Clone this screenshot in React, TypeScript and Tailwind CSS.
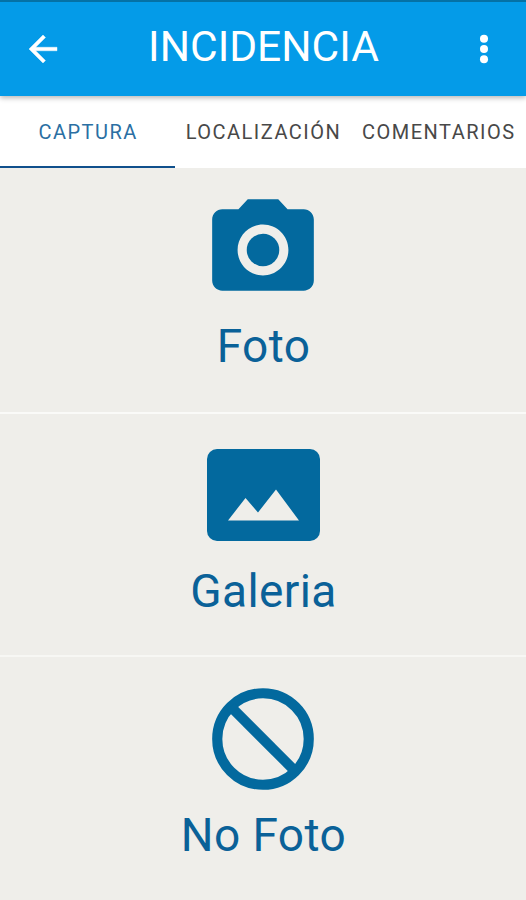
import { useState } from "react";
import type { ReactNode } from "react";

const tabs = ["CAPTURA", "LOCALIZACIÓN", "COMENTARIOS"];

function CameraIcon() {
  return (
    <svg viewBox="0 0 24 24" className="w-[122px] h-[122px]" fill="currentColor">
      <circle cx="12" cy="12" r="3.2" />
      <path d="M9 2 7.17 4H4c-1.1 0-2 .9-2 2v12c0 1.1.9 2 2 2h16c1.1 0 2-.9 2-2V6c0-1.1-.9-2-2-2h-3.17L15 2H9zm3 15c-2.76 0-5-2.24-5-5s2.24-5 5-5 5 2.24 5 5-2.24 5-5 5z" />
    </svg>
  );
}

function GalleryIcon() {
  return (
    <svg viewBox="0 0 122 122" className="w-[122px] h-[122px]">
      <rect x="5" y="15" width="113" height="92" rx="10" fill="currentColor" />
      <path d="M26 86.5 43.5 64 56 78.5 74 55.5 97 86.5z" fill="#efeeea" />
    </svg>
  );
}

function BlockIcon() {
  return (
    <svg viewBox="0 0 24 24" className="w-[122px] h-[122px]" fill="none" stroke="currentColor" strokeWidth="2">
      <circle cx="12" cy="12" r="9" />
      <path d="M5.64 5.64 18.36 18.36" />
    </svg>
  );
}

const options: { label: string; icon: ReactNode; className: string }[] = [
  { label: "Foto", icon: <CameraIcon />, className: "h-[246px] pt-[21px] border-b-2 border-[#fafaf8]" },
  { label: "Galeria", icon: <GalleryIcon />, className: "h-[243px] pt-[20px] border-b-2 border-[#f7f7f4]" },
  { label: "No Foto", icon: <BlockIcon />, className: "h-[243px] pt-[21px]" },
];

export default function App() {
  const [activeTab, setActiveTab] = useState(0);

  return (
    <div className="w-[526px] h-[900px] flex flex-col overflow-hidden bg-[#efeeea] font-[Roboto,sans-serif]">
      {/* Toolbar */}
      <header className="relative z-10 h-24 shrink-0 flex items-center justify-between border-t-2 border-[#0571a5] bg-[#049be8] pl-[22px] pr-[21px] text-white shadow-[0_2px_5px_rgba(0,0,0,0.28)]">
        <button aria-label="Volver">
          <svg viewBox="0 0 24 24" className="w-[42px] h-[42px]" fill="currentColor" stroke="currentColor" strokeWidth="0.25">
            <path d="M20 11H7.83l5.59-5.59L12 4l-8 8 8 8 1.41-1.41L7.83 13H20v-2z" />
          </svg>
        </button>
        <h1 className="pb-[5px] text-[42.5px] leading-[50px]">INCIDENCIA</h1>
        <button aria-label="Opciones">
          <svg viewBox="0 0 24 24" className="w-[42px] h-[42px]" fill="currentColor">
            <circle cx="12" cy="6.1" r="2.3" />
            <circle cx="12" cy="12" r="2.3" />
            <circle cx="12" cy="17.8" r="2.3" />
          </svg>
        </button>
      </header>

      {/* Tabs */}
      <nav className="grid grid-cols-3 h-[72px] shrink-0 bg-white">
        {tabs.map((tab, i) => (
          <button
            key={tab}
            onClick={() => setActiveTab(i)}
            className={`flex items-center justify-center border-b-2 pt-[2px] pl-px text-[20px] leading-6 tracking-[1.5px] ${
              activeTab === i ? "border-[#10508c] text-[#2b6fa3]" : "border-transparent text-[#484848]"
            }`}
          >
            {tab}
          </button>
        ))}
      </nav>

      {/* Capture options */}
      <main className="flex flex-col text-[#03699e]">
        {options.map((option) => (
          <button key={option.label} className={`flex flex-col items-center shrink-0 ${option.className}`}>
            {option.icon}
            <span className="mt-[8px] pl-px text-[46px] leading-[54px] tracking-[0.4px] text-[#0a6198]">{option.label}</span>
          </button>
        ))}
      </main>
    </div>
  );
}
